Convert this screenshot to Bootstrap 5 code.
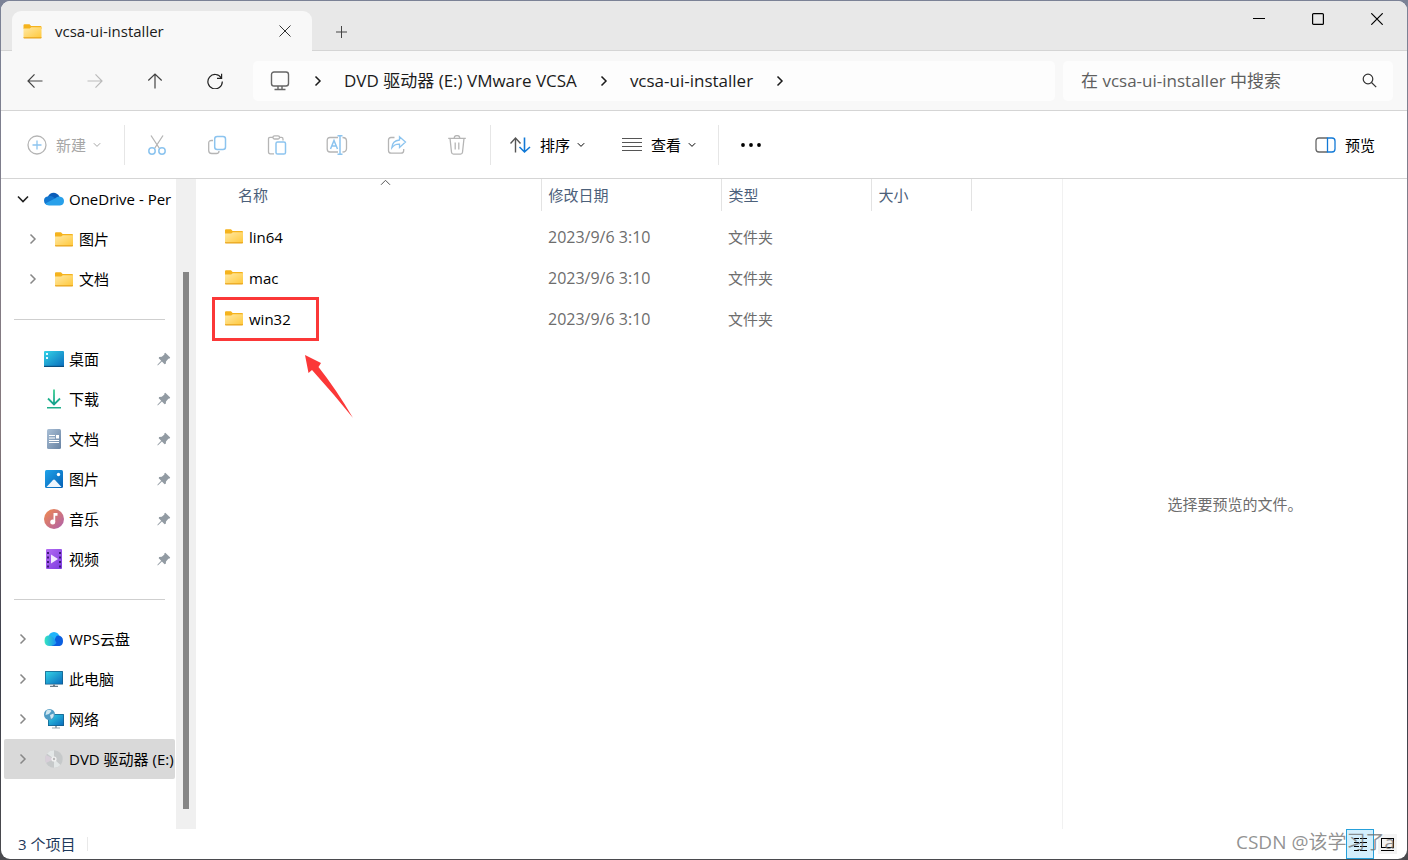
<!DOCTYPE html>
<html lang="zh-CN">
<head>
<meta charset="utf-8">
<meta name="viewport" content="width=device-width, initial-scale=1">
<title>vcsa-ui-installer</title>
<link href="https://cdn.jsdelivr.net/npm/bootstrap@5.3.0/dist/css/bootstrap.min.css" rel="stylesheet">
<style>
  :root { --line: #d5d5d5; --chrome: #f8f8f8; --ink: #1b1b1b; --muted-ink: #6d6d6d; --head-ink: #4c607a; --red: #fb3838; }
  body { font-family: "Open Sans", "Noto Sans CJK SC", sans-serif; font-size: 15px; line-height: 20px; color: #000;
         background: linear-gradient(#7b8296, #85787c 50%, #3c3e4a 75%, #4a4a4e); }
  svg { display: block; flex: none; }
  .explorer { min-height: calc(100vh - 2px); margin: 1px; border-radius: 9px; background: #fff; }
  .title-strip { height: 50px; background: #e8e8e8; border-bottom: 1px solid var(--line); padding: 0 1px 0 11px; }
  .window-tab { height: 40px; width: 300px; margin-bottom: -1px; padding: 0 21px 0 11px; gap: 13px; background: var(--chrome); border-radius: 9px 9px 0 0; font-weight: 500; color: var(--ink); }
  .plain { border: 0; background: none; padding: 0; color: inherit; display: flex; align-items: center; justify-content: center; }
  .caption { width: 59px; height: 36px; }
  .nav-strip { height: 60px; background: var(--chrome); border-bottom: 1px solid var(--line); padding-right: 14px; }
  .nav-tools { width: 252px; padding-left: 4px; color: #444; }
  .nav-tools .plain { width: 60px; height: 40px; }
  .field { height: 40px; background: #fdfdfd; border-radius: 5px; color: var(--ink); }
  .address, .search-text { font-size: 17px; }
  .address a { color: inherit; text-decoration: none; }
  .crumb-sep { margin: 0 22px 0 23px; }
  .search-wrap { width: 330px; }
  .search-text { background: none; border: 0; outline: 0; min-width: 0; color: #5f5f5f; }
  .search-text::placeholder { color: #5f5f5f; opacity: 1; }
  .command-strip { height: 68px; border-bottom: 1px solid var(--line); }
  .split { flex: none; width: 1px; height: 40px; margin: 0 2px 0 3px; background: #e6e6e6; }
  .tool { width: 60px; height: 40px; }
  .new-btn { width: 120px; padding-left: 26px; }
  .menu-btn { width: 111px; padding-left: 17px; }
  .new-btn, .menu-btn { height: 40px; justify-content: flex-start; }
  .new-btn span, .menu-btn span { margin: 0 7px 0 9px; }
  .faded { color: #a6a6a6; }
  .side-pane { flex: none; width: 195px; }
  .side-list { width: 174px; padding-left: 3px; margin-right: 1px; }
  .side-row { height: 40px; color: #000; text-decoration: none; white-space: nowrap; overflow: hidden; padding-left: 9px; }
  .chev, .glyph { flex: none; width: 20px; display: flex; justify-content: center; }
  .chev { color: #888; }
  .glyph { margin: 0 5px 0 11px; }
  .side-row.nested { padding-left: 19px; }
  .side-row.current { background: #d9d9d9; border-radius: 2px; }
  .side-rule { height: 40px; padding: 20px 10px 0; }
  .side-rule hr { margin: 0; border-color: #cfcfcf; opacity: 1; }
  .track { width: 20px; background: #f0f0f0; padding: 93px 7px 20px; }
  .thumb { width: 6px; background: #868686; }
  .files { table-layout: fixed; width: 100%; }
  .files th { height: 32px; font-weight: 400; color: var(--head-ink); padding: 0 8px 0 7px; border-right: 1px solid #e3e3e3; position: relative; }
  .files th:last-child { border: 0; }
  .files th:first-child { padding-left: 42px; }
  .files td { height: 41px; padding: 0 7px 2px; color: var(--muted-ink); }
  .files td:first-child { padding: 0 0 0 29px; }
  .files .stamp { font-size: 16px; }
  .files tbody::before { content: ""; display: block; height: 6px; }
  .files a { color: #000; text-decoration: none; gap: 6px; }
  .sort-mark { position: absolute; top: 0; left: 184px; }
  .marker-box { position: absolute; top: -12px; left: -13px; width: 107px; height: 44px; border: 3px solid var(--red); pointer-events: none; }
  .marker-arrow { position: absolute; top: 46px; left: 79px; }
  .preview-pane { flex: none; width: 345px; border-left: 1px solid #f1f1f1; color: var(--muted-ink); }
  .status-strip { height: 30px; padding: 0 10px 0 17px; color: #1e395b; }
  .status-split { width: 1px; height: 14px; margin-left: 12px; background: #e9e9e9; }
  .view-btn { width: 28px; height: 30px; }
  .view-btn.on { border: 1px solid #26a0da; background: #d4effc; }
  .view-small { width: 19px; height: 20px; background: #f3f3f3; }
  .credit { position: absolute; right: 12px; bottom: 5px; font-size: 19px; line-height: 24px; color: rgba(110,110,110,.75); pointer-events: none; }
</style>
</head>
<body>
<svg width="0" height="0" class="position-absolute" aria-hidden="true">
  <defs>
    <linearGradient id="gFolder" x1="0" y1="0" x2="1" y2="1"><stop offset="0" stop-color="#ffe9a6"/><stop offset="1" stop-color="#ffc83a"/></linearGradient>
    <linearGradient id="gScreen" x1="0" y1="0" x2="1" y2="1"><stop offset="0" stop-color="#33d3e6"/><stop offset="1" stop-color="#0a6cbd"/></linearGradient>
    <linearGradient id="gDown" x1="0" y1="0" x2="0" y2="1"><stop offset="0" stop-color="#3ccf91"/><stop offset="1" stop-color="#12a08c"/></linearGradient>
    <linearGradient id="gDoc" x1="0" y1="0" x2="1" y2="1"><stop offset="0" stop-color="#a9bfd6"/><stop offset="1" stop-color="#6883a3"/></linearGradient>
    <linearGradient id="gPic" x1="0" y1="0" x2="1" y2="1"><stop offset="0" stop-color="#1fa3ea"/><stop offset="1" stop-color="#0560b4"/></linearGradient>
    <linearGradient id="gMusic" x1="0" y1="0" x2="1" y2="1"><stop offset="0" stop-color="#f28b4b"/><stop offset="1" stop-color="#ad5fae"/></linearGradient>
    <linearGradient id="gVideo" x1="0" y1="0" x2="1" y2="1"><stop offset="0" stop-color="#b36bf2"/><stop offset="1" stop-color="#7d3be0"/></linearGradient>
    <linearGradient id="gWps" x1="0" y1="0" x2="1" y2="0"><stop offset="0" stop-color="#35e6c0"/><stop offset="1" stop-color="#1a8df5"/></linearGradient>
  </defs>
  <symbol id="folder" viewBox="0 0 18 15"><path d="M0 1.2Q0 .2 1 .2h5l1.600 1.900H17q1 0 1 1V5H0z" fill="#f5b31d"/><path d="M0 4.600h6.200l1.600-1.400H18V14H0z" fill="url(#gFolder)"/><path d="M0 13.200h18v.6q0 .7-.8.7H.8Q0 14.500 0 13.800z" fill="#e8a31b"/></symbol>
  <symbol id="right" viewBox="0 0 8 12"><path d="M1.500 1.500 6 6l-4.500 4.500" fill="none" stroke="currentColor" stroke-width="1.500"/></symbol>
  <symbol id="down" viewBox="0 0 8 6"><path d="m.8 1.200 3.200 3.200 3.200-3.200" fill="none" stroke="currentColor"/></symbol>
  <symbol id="pin" viewBox="0 0 14 14"><path d="M8.300.800 13.200 5.600 12.600 6.600 11.300 6.700 9 9.500 8.800 11.800 7.600 12.200 4.900 9.600 1 13.200.500 13.500.600 12.600 4.200 8.800 1.700 6.200 2.100 5 4.800 4.700 7.400 2.500 7.300 1.500z" fill="#929ba3"/></symbol>
</svg>

<div class="explorer d-flex flex-column overflow-hidden position-relative">
  <header class="title-strip d-flex align-items-end">
    <div class="window-tab d-flex align-items-center">
      <svg width="19" height="15"><use href="#folder"/></svg>
      <span class="flex-grow-1">vcsa-ui-installer</span>
      <button class="plain" aria-label="关闭标签页"><svg width="12" height="12"><path d="m.5.5 11 11m0-11-11 11" stroke="#333"/></svg></button>
    </div>
    <button class="plain ms-4 mb-2 pb-1" aria-label="新建标签页"><svg width="11" height="12"><path d="M5.500 0v12M0 6h11" stroke="#444"/></svg></button>
    <div class="ms-auto d-flex align-self-start">
      <button class="plain caption" aria-label="最小化"><svg width="12" height="12"><path d="M0 5.500h12" stroke="#000"/></svg></button>
      <button class="plain caption" aria-label="最大化"><svg width="12" height="12"><rect x=".6" y=".6" width="10.800" height="10.800" rx="1" fill="none" stroke="#000" stroke-width="1.200"/></svg></button>
      <button class="plain caption" aria-label="关闭"><svg width="12" height="12"><path d="m.3.300 11.400 11.400m0-11.400L.3 11.700" stroke="#000" stroke-width="1.200"/></svg></button>
    </div>
  </header>

  <nav class="nav-strip d-flex align-items-center">
    <div class="nav-tools d-flex">
      <button class="plain" aria-label="后退"><svg width="16" height="16" fill="none" stroke="currentColor" stroke-width="1.200"><path d="M15.500 8H1m6.500-6.700L1 8l6.500 6.700"/></svg></button>
      <button class="plain" aria-label="前进"><svg width="16" height="16" fill="none" stroke="#bbb" stroke-width="1.200"><path d="M.5 8H15M8.500 1.300 15 8l-6.500 6.700"/></svg></button>
      <button class="plain" aria-label="向上"><svg width="16" height="16" fill="none" stroke="currentColor" stroke-width="1.200"><path d="M8 15.500V1M1.300 7.500 8 1l6.700 6.500"/></svg></button>
      <button class="plain" aria-label="刷新"><svg width="16" height="16" fill="none" stroke="#222" stroke-width="1.200"><path d="M14.300 5A7.200 7.200 0 1 0 15.300 8.500M14.600.8v4.500h-4.600"/></svg></button>
    </div>
    <div class="field address d-flex align-items-center flex-grow-1">
      <svg class="ms-3" width="22" height="20" fill="none" stroke="#666" stroke-width="1.400"><rect x="2.500" y="1" width="17" height="14" rx="2.500"/><path d="M9 15v3m4-3v3M5.500 18.500h11"/></svg>
      <svg class="crumb-sep" width="8" height="12"><use href="#right"/></svg>
      <a href="#">DVD 驱动器 (E:) VMware VCSA</a>
      <svg class="crumb-sep" width="8" height="12"><use href="#right"/></svg>
      <a href="#">vcsa-ui-installer</a>
      <svg class="crumb-sep" width="8" height="12"><use href="#right"/></svg>
    </div>
    <label class="field search-wrap d-flex align-items-center ms-2 ps-3 pe-3">
      <input class="search-text flex-grow-1" type="search" placeholder="在 vcsa-ui-installer 中搜索" aria-label="搜索">
      <svg width="15" height="15" fill="none" stroke="#333" stroke-width="1.200"><circle cx="6" cy="6" r="4.800"/><path d="m9.500 9.500 4.700 4.700"/></svg>
    </label>
  </nav>

  <div class="command-strip d-flex align-items-center" role="toolbar">
    <button class="plain faded new-btn"><svg width="20" height="20" fill="none" stroke="#b5b5b5" stroke-width="1.300"><circle cx="10" cy="10" r="9"/><path d="M10 5.500v9M5.500 10h9" stroke="#8cc4ef"/></svg><span>新建</span><svg width="8" height="6"><use href="#down"/></svg></button>
    <div class="split"></div>
    <button class="plain tool" aria-label="剪切"><svg width="20" height="20" fill="none" stroke="#b5b5b5" stroke-width="1.300"><path d="m4 .5 8.800 13.500M16 .5 7.200 14"/><g stroke="#8cc4ef" stroke-width="1.500"><circle cx="5" cy="16" r="3.200"/><circle cx="15" cy="16" r="3.200"/></g></svg></button>
    <button class="plain tool" aria-label="复制"><svg width="20" height="20" fill="none" stroke="#b5b5b5" stroke-width="1.300"><path d="M6 5.500H4.500Q1.700 5.500 1.700 8v7.500q0 3 3 3h4.800q2.500 0 2.500-2.500"/><rect x="7.700" y="1.600" width="10.800" height="13" rx="2.500" stroke="#8cc4ef" stroke-width="1.500"/></svg></button>
    <button class="plain tool" aria-label="粘贴"><svg width="20" height="20" fill="none" stroke="#b5b5b5" stroke-width="1.300"><path d="M7 18.800H3.200q-1.700 0-1.700-1.700V4Q1.500 2.400 3 2.400h3M12 2.400h2.500Q16 2.400 16 4v1.500"/><rect x="6" y=".8" width="6.500" height="3.200" rx="1.500"/><rect x="9" y="7" width="9.500" height="12" rx="1.600" stroke="#8cc4ef" stroke-width="1.500"/></svg></button>
    <button class="plain tool" aria-label="重命名"><svg width="22" height="20" fill="none" stroke="#b5b5b5" stroke-width="1.300"><path d="M12 2.500H4Q1.200 2.500 1.200 5.500v8.500q0 3 2.800 3h8M16.500 2.500q4 0 4 3.500v7.500q0 3.500-4 3.500"/><path d="m4.500 14 3.500-8.500 3.500 8.500M5.700 11h4.700M14 1v18M11.500.8h5M11.500 19.200h5" stroke="#8cc4ef" stroke-width="1.500"/></svg></button>
    <button class="plain tool" aria-label="共享"><svg width="20" height="20" fill="none" stroke="#b5b5b5" stroke-width="1.300"><path d="M7.500 2.500H4Q1.500 2.500 1.500 5v10.500q0 2.700 2.700 2.700H14q2.700 0 2.700-2.700V14"/><path d="m12.500 1.700 6 5.300-6 5.500V9.200Q7.500 9 4.800 12.800 5.300 5.700 12.500 5z" stroke="#8cc4ef"/></svg></button>
    <button class="plain tool" aria-label="删除"><svg width="20" height="20" fill="none" stroke="#b5b5b5" stroke-width="1.300"><path d="M1.200 3.300h17.600M3 3.300l1.500 14q.2 1.800 2 1.800h7q1.800 0 2-1.800l1.500-14M7.200 3.300q0-2.700 2.800-2.700t2.800 2.700M8.200 7.500v7M11.800 7.500v7"/></svg></button>
    <div class="split"></div>
    <button class="plain menu-btn"><svg width="21" height="18" fill="none" stroke="#555" stroke-width="1.400"><path d="M5.500 16.500V2M.5 7.500 5.500 2l5 5.500"/><path d="M14.500 1.500V16M9.500 11l5 5 5.500-5" stroke="#1279d6" stroke-width="1.600"/></svg><span>排序</span><svg width="8" height="6"><use href="#down"/></svg></button>
    <button class="plain menu-btn"><svg width="21" height="14" stroke="#555" stroke-width="1"><path d="M1 .5h20M1 4.500h20M1 8.500h20M1 12.500h20"/></svg><span>查看</span><svg width="8" height="6"><use href="#down"/></svg></button>
    <div class="split"></div>
    <button class="plain tool" aria-label="更多"><svg width="20" height="4"><circle cx="2" cy="2" r="1.900"/><circle cx="10" cy="2" r="1.900"/><circle cx="18" cy="2" r="1.900"/></svg></button>
    <button class="plain gap-2 ms-auto me-4 pe-2"><svg width="22" height="16" fill="none" stroke="#666" stroke-width="1.300"><path d="M12.500 1H4Q1 1 1 4v8q0 3 3 3h8.500"/><path d="M12.500 1H17q3 0 3 3v8q0 3-3 3h-4.500z" stroke="#1279d6"/></svg><span>预览</span></button>
  </div>

  <div class="d-flex flex-grow-1">
    <aside class="side-pane d-flex">
      <div class="side-list">
        <a href="#" class="side-row d-flex align-items-center"><span class="chev"><svg width="12" height="8"><path d="m1 1.500 5 5 5-5" fill="none" stroke="#222" stroke-width="1.600"/></svg></span><span class="glyph"><svg width="20" height="14"><path d="M4 4.500C5.500.5 12-1.500 15.500 4.500L12 9 3 8z" fill="#0a5cb8"/><path d="M4.500 4.300C8 3.500 10 5.500 13 8L5 13Q0 13 0 8.500 0 4.800 4.500 4.300z" fill="#1277d0"/><path d="M15 4.500Q20 4.800 20 9t-4 4.500H5Q2.500 13.500 1.200 11.500L11 6.500Q13 4.500 15 4.500z" fill="#28a0ea"/></svg></span>OneDrive - Per</a>
        <a href="#" class="side-row nested d-flex align-items-center"><span class="chev"><svg width="8" height="12"><use href="#right"/></svg></span><span class="glyph"><svg width="18" height="15"><use href="#folder"/></svg></span>图片</a>
        <a href="#" class="side-row nested d-flex align-items-center"><span class="chev"><svg width="8" height="12"><use href="#right"/></svg></span><span class="glyph"><svg width="18" height="15"><use href="#folder"/></svg></span>文档</a>
        <div class="side-rule"><hr></div>
        <a href="#" class="side-row d-flex align-items-center"><span class="chev"></span><span class="glyph"><svg width="20" height="16"><rect width="20" height="16" rx="1" fill="url(#gScreen)"/><path d="M0 14.800h20V16H0z" fill="#0b4f80"/><path d="M2 2h2v2H2zM2 6h2v2H2z" fill="#e4fbff"/></svg></span><span class="flex-grow-1">桌面</span><svg class="me-1" width="14" height="14"><use href="#pin"/></svg></a>
        <a href="#" class="side-row d-flex align-items-center"><span class="chev"></span><span class="glyph"><svg width="16" height="20" fill="none" stroke="url(#gDown)" stroke-width="1.800"><path d="M8.010.5 8 15M2 9.500l6 6 6-6"/><path d="M1 18h14v1.500H1z" fill="#1fae8b" stroke="none"/></svg></span><span class="flex-grow-1">下载</span><svg class="me-1" width="14" height="14"><use href="#pin"/></svg></a>
        <a href="#" class="side-row d-flex align-items-center"><span class="chev"></span><span class="glyph"><svg width="14" height="20"><rect width="14" height="20" rx="1.500" fill="url(#gDoc)"/><path d="M2 6.500h6M2 9h6M2 11.500h10M2 13.500h10" stroke="#fff" stroke-width="1.200"/><path d="M9 6h3v3.500H9z" fill="#fff"/></svg></span><span class="flex-grow-1">文档</span><svg class="me-1" width="14" height="14"><use href="#pin"/></svg></a>
        <a href="#" class="side-row d-flex align-items-center"><span class="chev"></span><span class="glyph"><svg width="18" height="18"><rect width="18" height="18" rx="1.500" fill="url(#gPic)"/><path d="m1.500 17 6.300-6.800q1.200-1.200 2.400 0L16.500 17z" fill="#eef6fd"/><circle cx="13.500" cy="4.500" r="1.700" fill="#fff"/></svg></span><span class="flex-grow-1">图片</span><svg class="me-1" width="14" height="14"><use href="#pin"/></svg></a>
        <a href="#" class="side-row d-flex align-items-center"><span class="chev"></span><span class="glyph"><svg width="20" height="20"><circle cx="10" cy="10" r="10" fill="url(#gMusic)"/><circle cx="8.700" cy="13" r="2.500" fill="#fff"/><path d="M9.500 13V4h4v2.800h-2.300V13z" fill="#fff"/></svg></span><span class="flex-grow-1">音乐</span><svg class="me-1" width="14" height="14"><use href="#pin"/></svg></a>
        <a href="#" class="side-row d-flex align-items-center"><span class="chev"></span><span class="glyph"><svg width="16" height="20"><rect width="16" height="20" rx="1" fill="url(#gVideo)"/><path d="M2 3v16M14 3v16" stroke="#3c1a78" stroke-width="2" stroke-dasharray="2 2.500"/><path d="m5 5.500 7 4.500-7 4.500z" fill="#f2e9ff"/></svg></span><span class="flex-grow-1">视频</span><svg class="me-1" width="14" height="14"><use href="#pin"/></svg></a>
        <div class="side-rule"><hr></div>
        <a href="#" class="side-row d-flex align-items-center"><span class="chev"><svg width="8" height="12"><use href="#right"/></svg></span><span class="glyph"><svg width="20" height="14"><circle cx="10" cy="5.500" r="5.500" fill="#20b4fa"/><path d="M13.500 3.500Q19 3.500 19 9t-5 5H7l3.500-5q1-5 3-5.500z" fill="#0b5fe0"/><path d="M5 3.500q3.500 0 5.500 3.500l2 4Q10 14 6 14 .5 14 .5 8.800T5 3.500z" fill="url(#gWps)"/></svg></span>WPS云盘</a>
        <a href="#" class="side-row d-flex align-items-center"><span class="chev"><svg width="8" height="12"><use href="#right"/></svg></span><span class="glyph"><svg width="18" height="16"><rect width="18" height="13.500" rx=".6" fill="#155a85"/><rect x=".7" y=".7" width="16.600" height="12.100" fill="url(#gScreen)"/><path d="M8 13.500h2v1.300h3V16H5v-1.200h3z" fill="#6c7c88"/></svg></span>此电脑</a>
        <a href="#" class="side-row d-flex align-items-center"><span class="chev"><svg width="8" height="12"><use href="#right"/></svg></span><span class="glyph"><svg width="20" height="20"><rect x="4" y="5" width="16" height="12" rx=".6" fill="#155a85"/><rect x="4.700" y="5.700" width="14.600" height="10.600" fill="url(#gScreen)"/><path d="M11 17h2v1.500h3v1H8v-1h3z" fill="#9aa6ae"/><circle cx="5.500" cy="5.500" r="5.500" fill="#4f9bc4"/><path d="M2.500 1.500Q6 0 7.500 2L5 5 1.500 6zM6 6l3.500-1.500Q10.500 8 7 10z" fill="#cfe6f0"/></svg></span>网络</a>
        <a href="#" class="side-row current d-flex align-items-center"><span class="chev"><svg width="8" height="12"><use href="#right"/></svg></span><span class="glyph"><svg width="18" height="18"><circle cx="9" cy="9" r="8.700" fill="#c6c9ca"/><path d="M9 9 2 3.500Q5 .2 9 .3zM9 9l6.500 6Q12.500 18 9 17.700z" fill="#e3e7e7"/><path d="M9 9 1 13Q-.5 9 1 5z" fill="#d8cfd9"/><circle cx="9" cy="9" r="2.600" fill="#f2f2f2"/><circle cx="9" cy="9" r="1.200" fill="#b9b9b9"/></svg></span>DVD 驱动器 (E:)</a>
      </div>
      <div class="track d-flex"><div class="thumb"></div></div>
    </aside>

    <main class="flex-grow-1">
      <table class="files">
        <colgroup><col style="width:345px"><col style="width:180px"><col style="width:150px"><col style="width:100px"><col></colgroup>
        <thead><tr><th>名称<svg class="sort-mark" width="11" height="7"><path d="m1 5.800 4.500-4.500L10 5.800" fill="none" stroke="#555"/></svg></th><th>修改日期</th><th>类型</th><th>大小</th><th></th></tr></thead>
        <tbody>
          <tr><td><a href="#" class="d-inline-flex align-items-center"><svg width="18" height="15"><use href="#folder"/></svg>lin64</a></td><td class="stamp">2023/9/6 3:10</td><td>文件夹</td><td></td><td></td></tr>
          <tr><td><a href="#" class="d-inline-flex align-items-center"><svg width="18" height="15"><use href="#folder"/></svg>mac</a></td><td class="stamp">2023/9/6 3:10</td><td>文件夹</td><td></td><td></td></tr>
          <tr><td><a href="#" class="d-inline-flex align-items-center position-relative"><svg width="18" height="15"><use href="#folder"/></svg>win32<span class="marker-box"></span><svg class="marker-arrow" width="50" height="64"><path d="M1 0 17 8 14.500 12Q32 34 49 63L30 40 8 15 4.500 18z" fill="#fb3838"/></svg></a></td><td class="stamp">2023/9/6 3:10</td><td>文件夹</td><td></td><td></td></tr>
        </tbody>
      </table>
    </main>

    <section class="preview-pane d-flex align-items-center justify-content-center">选择要预览的文件。</section>
  </div>

  <footer class="status-strip d-flex align-items-center">
    <span>3 个项目</span><div class="status-split"></div>
    <button class="plain view-btn on ms-auto" aria-label="详细信息"><svg width="15" height="14" stroke="#000"><path d="M1 1.500h5M7 1.500h7M1 5.500h5M7 5.500h7M1 9.500h5M7 9.500h7M1 13.500h5M7 13.500h7"/></svg></button>
    <button class="plain view-small ms-1" aria-label="大图标"><svg width="15" height="15" fill="none" stroke="#000"><rect x="1.500" y="1.500" width="12" height="9"/><path d="M1 13.500h13"/></svg></button>
  </footer>
  <div class="credit">CSDN @该学习了a</div>
</div>
<script src="https://cdn.jsdelivr.net/npm/bootstrap@5.3.0/dist/js/bootstrap.bundle.min.js"></script>
</body>
</html>
